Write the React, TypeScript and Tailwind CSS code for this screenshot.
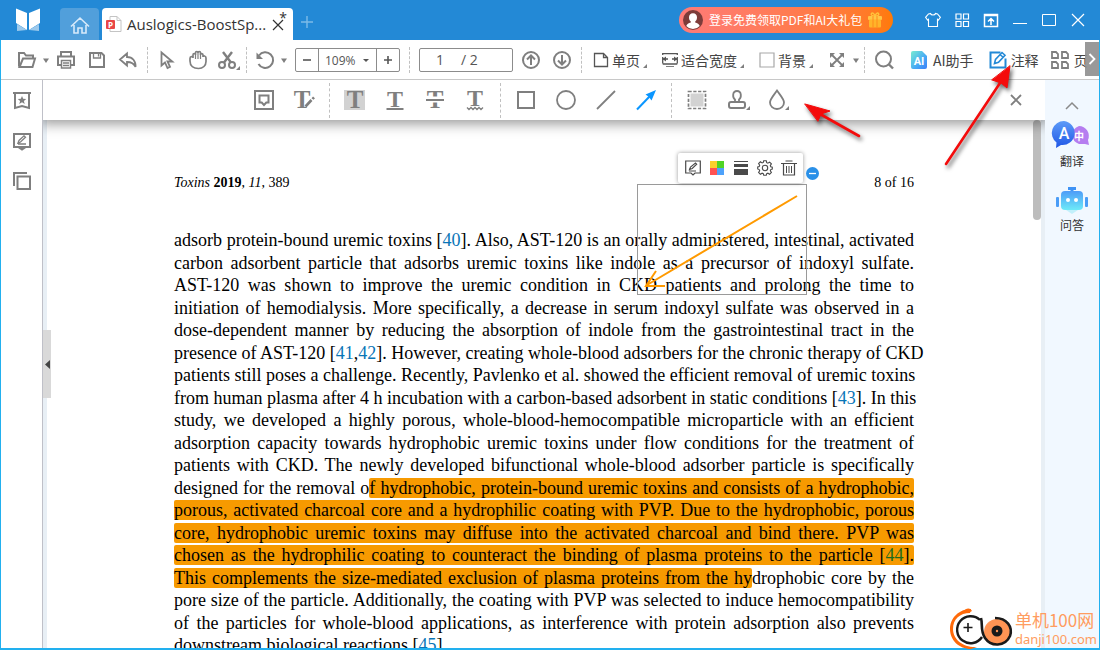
import type { ReactNode } from "react";
import clsx from "clsx";

type IconProps = { children: ReactNode; className?: string; box?: string };

function Icon({ children, className, box = "0 0 20 20" }: IconProps) {
  return (
    <svg
      viewBox={box}
      className={clsx("flex-none overflow-visible", className ?? "h-5 w-5")}
      fill="none"
      stroke="currentColor"
      strokeWidth="2"
      aria-hidden="true"
    >
      {children}
    </svg>
  );
}

function Tool({
  label,
  children,
  className = "w-[31px]",
}: {
  label: string;
  children: ReactNode;
  className?: string;
}) {
  return (
    <button
      type="button"
      aria-label={label}
      className={clsx("flex h-8 flex-none items-center justify-center", className)}
    >
      {children}
    </button>
  );
}

function Caret() {
  return (
    <button type="button" aria-label="更多" className="flex h-8 w-2 flex-none items-center">
      <Icon className="h-2 w-2" box="0 0 8 8">
        <path d="M1 2.5h6L4 7z" fill="currentColor" stroke="none" />
      </Icon>
    </button>
  );
}

function Corner() {
  return (
    <Icon className="mt-3 ml-[3px] h-1 w-1" box="0 0 4 4">
      <path d="M4 0v4H0z" fill="currentColor" stroke="none" />
    </Icon>
  );
}

function Divider({ className }: { className: string }) {
  return (
    <div className={clsx("flex flex-none justify-center", className)}>
      <div className="h-full border-l border-dashed border-[#c0c0c0]" />
    </div>
  );
}

function LetterT({ size = 24, y = 17 }: { size?: number; y?: number }) {
  return (
    <text
      x="12"
      y={y}
      textAnchor="middle"
      fontSize={size}
      fontWeight="bold"
      fontFamily="Liberation Serif, serif"
      fill="currentColor"
      stroke="none"
    >
      T
    </text>
  );
}

function TitleBar() {
  return (
    <header className="flex h-10 flex-none items-stretch bg-[#2389d6] pl-px text-white">
      <div className="flex w-[59px] items-center pl-[15px]">
        <svg viewBox="0 0 24 24" className="h-6 w-6" aria-label="PDF" role="img">
          <path d="M0 .5 11 5v17L0 15z" fill="#fff" />
          <path d="M24 .5 13 5v17l11-7z" fill="#fff" />
          <path d="M1 16v7l10-1z M23 16v7l-10-1z" fill="#9cc9ec" />
        </svg>
      </div>
      <button
        type="button"
        aria-label="主页"
        className="mt-2 flex w-[39px] items-center justify-center rounded-t bg-[#519fdb] text-[#d8eafa]"
      >
        <Icon className="mt-1 h-5 w-5">
          <path d="M1 10.5 10 2l9 8.5M4 9v8h4v-5h4v5h4V9" strokeWidth="1.6" />
        </Icon>
      </button>
      <div className="relative mt-2 ml-[3px] flex w-[191px] items-center rounded-t bg-white text-[#333]">
        <svg viewBox="0 0 18 18" className="ml-[3px] h-[18px] w-[18px] overflow-visible" aria-hidden="true">
          <path d="M5 1.5h7l4 4v11H5z" fill="#fff" stroke="#c4c4c4" />
          <path d="M12 1.5v4h4" fill="none" stroke="#c4c4c4" />
          <rect x="1" y="5" width="9" height="9" rx="1" fill="#e94646" />
          <text x="5.5" y="12.5" fontSize="8" fontWeight="bold" textAnchor="middle" fill="#fff" fontFamily="Open Sans, sans-serif">
            P
          </text>
        </svg>
        <span className="ml-1 flex-1 font-['Open_Sans',sans-serif] text-[15px] whitespace-nowrap">
          Auslogics-BoostSp...
        </span>
        <button type="button" aria-label="关闭标签" className="mt-0.5 mr-2 p-px">
          <Icon className="h-3 w-3" box="0 0 12 12">
            <path d="m1 1 10 10M11 1 1 11" strokeWidth="1.2" />
          </Icon>
        </button>
        <span className="absolute top-0.5 right-[6px] font-['Open_Sans',sans-serif] text-sm leading-4">*</span>
      </div>
      <button type="button" aria-label="新建标签" className="px-2 pt-1">
        <Icon className="h-3 w-3 text-[#7dbbe8]" box="0 0 12 12">
          <path d="M6 0v12M0 6h12" strokeWidth="1.4" />
        </Icon>
      </button>

      <button
        type="button"
        className="my-[7px] mr-[25px] ml-auto flex w-[214px] flex-none items-center rounded-full bg-linear-to-r from-[#ff7b78] to-[#ff7a05] text-xs whitespace-nowrap"
      >
        <svg viewBox="0 0 20 20" className="ml-1 h-5 w-5" aria-hidden="true">
          <circle cx="10" cy="10" r="10" fill="#7d3c3a" />
          <path d="M10 3.2c2.600 0 4 1.800 4 4.200 0 1.800-.8 3.200-1.800 4v1.100c2.200.7 4 1.500 4.500 3.500a9 9 0 0 1-13.400 0c.5-2 2.300-2.800 4.500-3.500v-1.100c-1-.8-1.800-2.200-1.800-4 0-2.400 1.400-4.200 4-4.200z" fill="#fff" />
        </svg>
        <span className="ml-[6px]">登录免费领取PDF和AI大礼包</span>
        <svg viewBox="0 0 16 16" className="ml-[5px] h-4 w-4" aria-hidden="true">
          <path d="M7.500 4C5 4 3.500 3 4.500 1.500S7.500 2 8 4c.5-2 2.500-4 3.500-2.500S11 4 8.500 4" fill="none" stroke="#ffc23a" strokeWidth="1.400" />
          <rect x="1" y="4" width="14" height="4" rx="1" fill="#ffc646" />
          <rect x="2" y="7.500" width="12" height="8" rx="1" fill="#ffb429" />
          <path d="M6 4v11.500M10 4v11.500" stroke="#ff8a1c" />
        </svg>
      </button>
      <div className="mr-2 flex flex-none items-center">
        <Tool label="皮肤" className="w-[29px]">
          <Icon className="h-4 w-4" box="0 0 16 16">
            <path d="M5.500 1.500 3.500 2 .6 5.300 2.500 8l1-.7v7.200h9V7.300l1 .7 1.900-2.700L12.500 2l-2-.5C10 3.400 6 3.400 5.500 1.500z" strokeWidth="1.100" />
          </Icon>
        </Tool>
        <Tool label="应用" className="w-[29px]">
          <Icon className="h-4 w-4" box="0 0 16 16">
            <path d="M2 2h5v5H2zM9.500 2h5v5h-5zM2 9.500h5v5H2zM9.500 9.500h5v5h-5z" strokeWidth="1.200" />
          </Icon>
        </Tool>
        <Tool label="上传" className="w-[29px]">
          <Icon className="h-4 w-4" box="0 0 16 16">
            <path d="M1.500 2.500h13v12h-13zM1.500 3.500h13M8 13V7M5 9.500l3-3 3 3" strokeWidth="1.500" />
          </Icon>
        </Tool>
        <Tool label="最小化" className="w-[29px]">
          <Icon className="h-4 w-4" box="0 0 16 16">
            <path d="M1 11.500h14" strokeWidth="1" />
          </Icon>
        </Tool>
        <Tool label="最大化" className="w-[29px]">
          <Icon className="h-4 w-4" box="0 0 16 16">
            <path d="M1.500 2.500h13v11h-13z" strokeWidth="1" />
          </Icon>
        </Tool>
        <Tool label="关闭" className="w-[29px]">
          <Icon className="h-4 w-4" box="0 0 16 16">
            <path d="m2 2 12 12M14 2 2 14" strokeWidth="1.200" />
          </Icon>
        </Tool>
      </div>
    </header>
  );
}

function MainToolbar() {
  return (
    <div className="relative flex h-10 flex-none items-center overflow-hidden border-b border-[#c8c8c8] bg-white pl-[11px] text-sm whitespace-nowrap text-[#7f7f7f]">
      <Tool label="打开" className="w-[30px]">
        <Icon>
          <path d="M2 16.500V3h5l2 2.500h7V8M2.500 17 6 8.500h12L15.500 17z" />
        </Icon>
      </Tool>
      <Caret />
      <Tool label="打印">
        <Icon>
          <path d="M5 6V2h10v4M5 15H2V6.500h16V15h-3" />
          <path d="M5.500 10.500h9V18h-9zM7 13h6M7 15.500h6" strokeWidth="1.500" />
        </Icon>
      </Tool>
      <Tool label="保存">
        <Icon>
          <path d="M3 3h11.500L17 5.500V17H3z" />
          <path d="M6.500 3v5h7V3M11.500 4v2.500" strokeWidth="1.300" />
        </Icon>
      </Tool>
      <Tool label="撤销">
        <Icon>
          <path d="M9 3.500 2 9.500l7 6V12c4 0 7 1.500 8.500 5C18 11 14.500 7 9 7z" strokeWidth="1.800" />
        </Icon>
      </Tool>
      <Divider className="h-[26px] w-2" />
      <Tool label="选择">
        <Icon>
          <path d="M4.500 2.500v13l3.500-3 2.500 5.500 2.500-1.200-2.500-5.300h4.800z" strokeWidth="1.800" />
        </Icon>
      </Tool>
      <Tool label="手型">
        <Icon>
          <path d="M2 8.500C2 6 5 6 5 8V5c0-2 2.500-2 2.500 0V3c0-2 2.500-2 2.500 0 0-2 2.500-2 2.500 0v2c0-2 2.500-1.500 2.500 0v2c0-1.500 3-1.500 3 1v3.500c0 4-3 7-7.500 7C5.500 18.500 2 16 2 11z" strokeWidth="1.700" />
          <path d="M7.500 5v4M10 3v6M12.500 5v4" strokeWidth="1.200" />
        </Icon>
      </Tool>
      <Tool label="剪切">
        <Icon className="h-5 w-6" box="0 0 24 20">
          <path d="m6 2 8 10.500M15 2 7 12.500" strokeWidth="2.400" />
          <circle cx="5" cy="15" r="3" />
          <circle cx="15" cy="15" r="3" />
          <path d="M23 16v4h-4z" fill="currentColor" stroke="none" />
        </Icon>
      </Tool>
      <Divider className="h-[26px] w-[5px]" />
      <Tool label="旋转">
        <Icon>
          <path d="M4 5.500A7.800 7.800 0 1 1 3.500 14" />
          <path d="M1.500 2.500V9H8z" fill="currentColor" stroke="none" />
        </Icon>
      </Tool>
      <Caret />
      <div className="ml-[7px] flex h-6 w-[105px] flex-none rounded-xs border border-[#8c8c8c] text-[#555]">
        <button type="button" aria-label="缩小" className="flex w-[23px] items-center justify-center border-r border-[#8c8c8c]">
          <Icon className="h-2 w-2" box="0 0 8 8">
            <path d="M0 4h8" strokeWidth="1.600" />
          </Icon>
        </button>
        <div className="relative flex-1">
          <select aria-label="缩放比例" className="h-full w-full appearance-none pl-1.5 font-['Open_Sans',sans-serif] text-xs outline-none">
            <option>109%</option>
          </select>
          <Icon className="pointer-events-none absolute top-2 right-1.5 h-2 w-2" box="0 0 8 8">
            <path d="M1 2h6L4 5z" fill="currentColor" stroke="none" />
          </Icon>
        </div>
        <button type="button" aria-label="放大" className="flex w-[23px] items-center justify-center border-l border-[#8c8c8c]">
          <Icon className="h-2 w-2" box="0 0 8 8">
            <path d="M0 4h8M4 0v8" strokeWidth="1.600" />
          </Icon>
        </button>
      </div>
      <Divider className="h-[26px] w-[19px]" />
      <div className="flex h-6 w-[94px] flex-none items-center rounded-xs border border-[#8c8c8c] font-['Open_Sans',sans-serif] text-sm text-[#555]">
        <input aria-label="页码" defaultValue="1" className="w-[41px] pl-4 outline-none" />
        <span>/ 2</span>
      </div>
      <Tool label="上一页" className="ml-0.5 w-[31px]">
        <Icon>
          <circle cx="10" cy="10" r="8" />
          <path d="M10 15V6M6 9.500l4-4 4 4" />
        </Icon>
      </Tool>
      <Tool label="下一页">
        <Icon>
          <circle cx="10" cy="10" r="8" />
          <path d="M10 5v9M6 10.500l4 4 4-4" />
        </Icon>
      </Tool>
      <Divider className="h-[26px] w-2" />
      <button type="button" className="ml-2 flex flex-none items-center">
        <Icon className="h-4 w-4" box="0 0 16 16">
          <path d="M1.500 1.500h9l4 4v9h-13zM10.500 1.500v4h4" stroke="#555" strokeWidth="1.300" />
        </Icon>
        <span className="ml-[3px] text-[#444]">单页</span>
        <Corner />
      </button>
      <button type="button" className="ml-[15px] flex flex-none items-center">
        <Icon className="h-4 w-4" box="0 0 16 16">
          <path d="M.7 3v-1.300h14.600V3M.7 5v6.500M15.300 5v6.500M.7 12h14.600M1 7h5M15 7h-5" stroke="#555" strokeWidth="1.300" />
          <path d="m4 4.500-3.500 2.500L4 9.500zM12 4.500 15.500 7 12 9.500z" fill="#555" stroke="none" />
          <path d="M4 14.500h8" strokeWidth="1" />
        </Icon>
        <span className="ml-[3px] text-[#444]">适合宽度</span>
        <Corner />
      </button>
      <button type="button" className="ml-[15px] flex flex-none items-center">
        <Icon className="h-4 w-4" box="0 0 16 16">
          <path d="M1 1h14v14H1z" stroke="#a8a8a8" strokeWidth="1.200" />
        </Icon>
        <span className="ml-[3px] text-[#444]">背景</span>
        <Corner />
      </button>
      <Tool label="适应窗口" className="ml-2 w-[31px]">
        <Icon>
          <path d="m5 5 10 10M15 5 5 15" strokeWidth="1.800" />
          <path d="M3 3h5L3 8zM17 3v5l-5-5zM17 17h-5l5-5zM3 17v-5l5 5z" fill="currentColor" stroke="none" />
        </Icon>
      </Tool>
      <Caret />
      <Divider className="h-[26px] w-2" />
      <Tool label="搜索">
        <Icon>
          <circle cx="9.500" cy="9" r="7.500" />
          <path d="m15 14.500 4 4" strokeWidth="2.400" />
        </Icon>
      </Tool>
      <button type="button" className="ml-3 flex flex-none items-center text-[#444]">
        <svg viewBox="0 0 16 18" className="h-[18px] w-4" aria-hidden="true">
          <defs>
            <linearGradient id="ai" x1="0" y1="0" x2="1" y2="1">
              <stop offset="0" stopColor="#79ecd2" />
              <stop offset=".6" stopColor="#46a9f5" />
              <stop offset="1" stopColor="#3d7ff8" />
            </linearGradient>
          </defs>
          <path d="M2 0h9l5 5v11a2 2 0 0 1-2 2H2a2 2 0 0 1-2-2V2a2 2 0 0 1 2-2z" fill="url(#ai)" />
          <text x="8" y="14" fontSize="11" fontWeight="bold" textAnchor="middle" fill="#fff" fontFamily="Roboto, sans-serif">
            AI
          </text>
        </svg>
        <span className="ml-[6px]">AI助手</span>
      </button>
      <button type="button" className="ml-3.5 flex flex-none items-center text-[#444]">
        <Icon className="h-5 w-5 text-[#2389d6]">
          <path d="M12.500 2.500h-10v15h15v-9" />
          <path d="m6.500 13.500 1-4L14 2.500l3 2.700-6.500 7zM12.500 5l3 2.500" strokeWidth="1.600" />
        </Icon>
        <span className="ml-[3px]">注释</span>
      </button>
      <button type="button" className="ml-3 flex flex-none items-center text-[#444]">
        <Icon className="h-[18px] w-[18px] text-[#7f7f7f]" box="0 0 18 18">
          <path d="M1 1h4l2 2v4H1zM11 1h4l2 2v4h-6zM1 11h4l2 2v4H1zM11 11h4l2 2v4h-6z" strokeWidth="1.800" />
        </Icon>
        <span className="ml-[5px]">页</span>
      </button>
      <button
        type="button"
        aria-label="展开工具栏"
        className="absolute top-0.5 right-0 flex h-[34px] w-[14px] items-center justify-center bg-[#8e8e8e]/90 text-white"
      >
        <Icon className="h-3 w-2" box="0 0 8 12">
          <path d="m1.500 1 5 5-5 5" strokeWidth="1.800" />
        </Icon>
      </button>
    </div>
  );
}

function AnnotationBar() {
  return (
    <div className="relative z-10 flex h-10 flex-none items-center bg-white text-[#7f7f7f] shadow-[0_1px_12px_3px_rgba(0,0,0,0.4)] [clip-path:inset(0_0_-20px_0)]">
      <div className="flex flex-1 items-center justify-center">
        <Tool label="注释框" className="w-10">
          <Icon>
            <path d="M1 1h18v18H1z" />
            <path d="M5.500 5.500h9v7h-2.200L10 15l-2.300-2.500H5.500z" />
          </Icon>
        </Tool>
        <Tool label="文字编辑" className="w-10">
          <Icon className="h-6 w-6" box="0 0 24 24">
            <g transform="translate(-2 0)">
              <LetterT size={25} y={20} />
            </g>
            <path d="m14 17 6-6" stroke="#fff" strokeWidth="5" />
            <path d="m13.500 18.500 6-6.500M20.500 11l1.500-1.700" strokeWidth="2.600" />
          </Icon>
        </Tool>
        <Divider className="h-[35px] w-[11px]" />
        <Tool label="高亮" className="w-10">
          <span className="flex h-5 w-[21px] items-center justify-center bg-[#d2d2d2]">
            <Icon className="h-6 w-6" box="0 0 24 24">
              <LetterT size={25} y={20} />
            </Icon>
          </span>
        </Tool>
        <Tool label="下划线" className="w-10">
          <Icon className="h-6 w-6" box="0 0 24 24">
            <LetterT y={19} />
            <path d="M3.500 21h17" />
          </Icon>
        </Tool>
        <Tool label="删除线" className="w-10">
          <Icon className="h-6 w-6" box="0 0 24 24">
            <LetterT size={25} y={20} />
            <path d="M2 11.500h20" stroke="#fff" strokeWidth="6" />
            <path d="M3 12h18" />
          </Icon>
        </Tool>
        <Tool label="波浪线" className="w-10">
          <Icon className="h-6 w-6" box="0 0 24 24">
            <LetterT y={18} />
            <path d="m4 19.500 2 2 2-2 2 2 2-2 2 2 2-2 2 2 2-2" strokeWidth="1.300" />
          </Icon>
        </Tool>
        <Divider className="h-[35px] w-[11px]" />
        <Tool label="矩形" className="w-10">
          <Icon>
            <path d="M2 2h16v16H2z" />
          </Icon>
        </Tool>
        <Tool label="椭圆" className="w-10">
          <Icon>
            <circle cx="10" cy="10" r="9" strokeWidth="1.800" />
          </Icon>
        </Tool>
        <Tool label="直线" className="w-10">
          <Icon>
            <path d="M1 19 19 1" strokeWidth="1.800" />
          </Icon>
        </Tool>
        <Tool label="箭头" className="w-10 text-[#0a96ff]">
          <Icon>
            <path d="M1 19.500 14 6" />
            <path d="M20 0 9.500 4.500 13 7l2.500 3.500z" fill="currentColor" stroke="none" />
          </Icon>
        </Tool>
        <Divider className="h-[35px] w-[11px]" />
        <Tool label="区域高亮" className="w-10">
          <Icon>
            <rect x="3.500" y="3.500" width="13" height="13" fill="#d2d2d2" stroke="none" />
            <path d="M1.500 1.500h17v17h-17z" strokeWidth="1.700" strokeDasharray="3.200 1.600" />
          </Icon>
        </Tool>
        <Tool label="图章" className="w-10">
          <Icon className="ml-1 h-5 w-6" box="0 0 24 20">
            <path d="M8 12V9.500C5.500 8 5 1 10 1s4.500 7 2 8.500V12" strokeWidth="1.800" />
            <rect x="2" y="12" width="16" height="6" rx="2" />
            <path d="M23 16v4h-4z" fill="currentColor" stroke="none" />
          </Icon>
        </Tool>
        <Tool label="颜色" className="w-10">
          <Icon className="ml-1 h-5 w-6" box="0 0 24 20">
            <path d="M10 .5C7 5 3 9 3 12.500a7 6.500 0 0 0 14 0C17 9 13 5 10 .5z" strokeWidth="1.800" />
            <path d="M22 16v4h-4z" fill="currentColor" stroke="none" />
          </Icon>
        </Tool>
      </div>
      <Tool label="关闭工具栏" className="w-12 pr-2.5">
        <Icon className="h-3 w-3" box="0 0 12 12">
          <path d="m1 1 10 10M11 1 1 11" strokeWidth="1.800" />
        </Icon>
      </Tool>
    </div>
  );
}

function LeftRail() {
  return (
    <nav className="flex w-[42px] flex-none flex-col items-center border-r border-[#bfc0c8] bg-white pt-[5px] text-[#7f7f7f]">
      <Tool label="书签" className="mb-2 w-8">
        <Icon>
          <path d="M1 2h18M3 2v15l7-2 7 2V2" />
          <path d="m10 5 1.200 2.800 3 .2-2.300 2 .8 3-2.700-1.700L7.300 13l.8-3-2.300-2 3-.2z" fill="currentColor" stroke="none" />
        </Icon>
      </Tool>
      <Tool label="批注" className="mb-2 w-8">
        <Icon>
          <path d="M2 3h16v13H2z" />
          <path d="m6 12 1-2.500L12 4.800l1.500 1.500L8.500 11zM6 13h8" strokeWidth="1.300" />
          <path d="M6 17h8l-4 2.800z" fill="currentColor" stroke="none" />
        </Icon>
      </Tool>
      <Tool label="缩略图" className="w-8">
        <Icon>
          <path d="M5.500 5.500H18V18H5.500zM15 2H2v13" />
        </Icon>
      </Tool>
    </nav>
  );
}

function RightRail() {
  return (
    <aside className="flex w-[54px] flex-none flex-col items-center bg-[#f1f8ff] text-xs text-[#333]">
      <button type="button" aria-label="收起" className="mt-5 text-[#8a8a8a]">
        <Icon className="h-3 w-3.5" box="0 0 14 12">
          <path d="m1 9 6-6 6 6" strokeWidth="1.500" />
        </Icon>
      </button>
      <button type="button" className="mt-2 flex flex-col items-center">
        <svg viewBox="0 0 38 30" className="h-[30px] w-[38px] overflow-visible" aria-hidden="true">
          <defs>
            <linearGradient id="tr" x1="0" y1="0" x2="0" y2="1">
              <stop offset="0" stopColor="#5c9bf8" />
              <stop offset="1" stopColor="#2057e6" />
            </linearGradient>
          </defs>
          <path d="M26 6a10 10 0 0 1 9 14l1 5-4-1h-6a9.500 9.500 0 0 1 0-18z" fill="#b57df0" />
          <text x="26" y="20" fontSize="10" fontWeight="bold" textAnchor="middle" fill="#fff" fontFamily="Noto Sans CJK SC, sans-serif">
            中
          </text>
          <path d="M11 1a12 12 0 1 1-3 24l-5 3 .5-5.500A12 12 0 0 1 11 1z" fill="url(#tr)" />
          <text x="11" y="18.500" fontSize="16" textAnchor="middle" fill="#fff" fontFamily="Roboto, sans-serif" fontWeight="500">
            A
          </text>
        </svg>
        <span className="mt-0.5 leading-[18px]">翻译</span>
      </button>
      <button type="button" className="mt-4 flex flex-col items-center">
        <svg viewBox="0 0 32 28" className="h-7 w-8" aria-hidden="true">
          <defs>
            <linearGradient id="bot" x1="0" y1="0" x2="0" y2="1">
              <stop offset="0" stopColor="#4e9cf8" />
              <stop offset="1" stopColor="#6deaf8" />
            </linearGradient>
          </defs>
          <path d="M12 1h8v3h-8zM14.500 3h3v4h-3z" fill="#3f93f5" />
          <rect x="5" y="5" width="22" height="19" rx="4" fill="url(#bot)" />
          <rect x="0" y="11" width="3" height="10" rx="1" fill="#4a9df7" />
          <rect x="29" y="11" width="3" height="10" rx="1" fill="#4a9df7" />
          <path d="M10 24h12l-6 4z" fill="#c2f0fb" />
          <circle cx="12" cy="14" r="2" fill="#fff" />
          <circle cx="20" cy="14" r="2" fill="#fff" />
        </svg>
        <span className="mt-0.5 leading-[18px]">问答</span>
      </button>
    </aside>
  );
}

function Cite({ children }: { children: ReactNode }) {
  return <a href="#ref" className="text-[#0875b7]">{children}</a>;
}

function Mark({ children }: { children: ReactNode }) {
  return <mark className="rounded-xs bg-[#f79a00] text-black">{children}</mark>;
}

const lines: ReactNode[] = [
  <>adsorb protein-bound uremic toxins [<Cite>40</Cite>]. Also, AST-120 is an orally administered, intestinal, activated</>,
  "carbon adsorbent particle that adsorbs uremic toxins like indole as a precursor of indoxyl sulfate.",
  "AST-120 was shown to improve the uremic condition in CKD patients and prolong the time to",
  "initiation of hemodialysis. More specifically, a decrease in serum indoxyl sulfate was observed in a",
  "dose-dependent manner by reducing the absorption of indole from the gastrointestinal tract in the",
  <>presence of AST-120 [<Cite>41</Cite>,<Cite>42</Cite>]. However, creating whole-blood adsorbers for the chronic therapy of CKD</>,
  "patients still poses a challenge. Recently, Pavlenko et al. showed the efficient removal of uremic toxins",
  <>from human plasma after 4 h incubation with a carbon-based adsorbent in static conditions [<Cite>43</Cite>]. In this</>,
  "study, we developed a highly porous, whole-blood-hemocompatible microparticle with an efficient",
  "adsorption capacity towards hydrophobic uremic toxins under flow conditions for the treatment of",
  "patients with CKD. The newly developed bifunctional whole-blood adsorber particle is specifically",
  <>designed for the removal o<Mark>f hydrophobic, protein-bound uremic toxins and consists of a hydrophobic,</Mark></>,
  <Mark>porous, activated charcoal core and a hydrophilic coating with PVP. Due to the hydrophobic, porous</Mark>,
  <Mark>core, hydrophobic uremic toxins may diffuse into the activated charcoal and bind there. PVP was</Mark>,
  <Mark>chosen as the hydrophilic coating to counteract the binding of plasma proteins to the particle [<a href="#ref" className="text-[#1d6a1f]">44</a>].</Mark>,
  <><Mark>This complements the size-mediated exclusion of plasma proteins from the hy</Mark>drophobic core by the</>,
  "pore size of the particle. Additionally, the coating with PVP was selected to induce hemocompatibility",
  "of the particles for whole-blood applications, as interference with protein adsorption also prevents",
];

function ArrowAnnotation() {
  return (
    <>
      <div className="absolute top-16 left-[463px] h-[111px] w-[170px] border border-[#9a9a9a]">
        <svg viewBox="0 0 168 109" className="h-full w-full" fill="none" stroke="#ff9a00" strokeWidth="2" aria-hidden="true">
          <path d="M159 11 9 100M18 86 8 101h19" />
        </svg>
      </div>
      <div className="absolute top-[33px] left-[504px] flex h-[30px] w-[125px] items-center justify-center rounded-xs bg-white text-[#4a4a4a] shadow-[0_0_4px_rgba(0,0,0,0.4)]">
        <Tool label="编辑批注" className="w-6">
          <Icon className="h-4 w-4" box="0 0 16 16">
            <path d="M.7 1h14.600v12H10l-2 2-2-2H.7z" strokeWidth="1.200" />
            <path d="m4.500 9.500 1-2.500 5-4 1.200 1.200-4.500 4.300zM4 11h7" strokeWidth="1.100" />
          </Icon>
        </Tool>
        <Tool label="颜色" className="w-6">
          <Icon className="h-3.5 w-3.5" box="0 0 14 14">
            <g stroke="none">
              <path d="M0 0h7v7H0z" fill="#fbd02d" />
              <path d="M7 0h7v7H7z" fill="#50d426" />
              <path d="M0 7h7v7H0z" fill="#ff5252" />
              <path d="M7 7h7v7H7z" fill="#4ea2fb" />
            </g>
          </Icon>
        </Tool>
        <Tool label="线宽" className="w-6">
          <Icon className="h-3.5 w-3.5" box="0 0 14 14">
            <path d="M0 0h14v1H0zM0 3h14v3H0zM0 8h14v6H0z" fill="currentColor" stroke="none" />
          </Icon>
        </Tool>
        <Tool label="设置" className="w-6">
          <Icon className="h-4 w-4" box="0 0 16 16">
            <path d="M6.700.8h2.600l.4 1.900 1.200.5 1.700-1.100 1.800 1.800-1.100 1.700.5 1.200 1.500.3v2l-1.500.5-.5 1.200 1.100 1.700-1.800 1.800-1.700-1.100-1.200.5-.4 1.500H6.700l-.4-1.500-1.200-.5-1.700 1.100-1.800-1.800 1.100-1.700-.5-1.200L.7 9V7l1.500-.5.5-1.200-1.100-1.700 1.800-1.800 1.700 1.100 1.200-.5z" strokeWidth="1.100" />
            <circle cx="8" cy="8" r="2.700" strokeWidth="1.100" />
          </Icon>
        </Tool>
        <Tool label="删除" className="w-6">
          <Icon className="h-4 w-4" box="0 0 16 16">
            <path d="M0 3.500h16M4.500 1h7M2.500 4v11h11V4" strokeWidth="1.200" />
            <path d="M5.500 6v7M8 6v7M10.500 6v7" strokeWidth="1" />
          </Icon>
        </Tool>
      </div>
      <button type="button" aria-label="收起工具条" className="absolute top-[47px] left-[632px]">
        <svg viewBox="0 0 13 13" className="h-[13px] w-[13px]" aria-hidden="true">
          <circle cx="6.500" cy="6.500" r="6.500" fill="#2a90e8" />
          <path d="M3 6.500h7" stroke="#fff" strokeWidth="1.300" />
        </svg>
      </button>
    </>
  );
}

function Document() {
  return (
    <main className="relative flex min-h-0 flex-1 border-x-4 border-[#e8eff5] bg-white">
      <div className="min-w-0 flex-1 overflow-hidden">
        <article className="relative mx-auto w-[740px] pt-[52px] font-['Liberation_Serif',serif] text-[18px] leading-[22px] text-black">
          <div className="mb-[35px] flex justify-between text-[14px] leading-[22px]">
            <p>
              <i>Toxins</i> <b>2019</b>, <i>11</i>, 389
            </p>
            <p>8 of 16</p>
          </div>
          {lines.map((line, i) => (
            <p key={i} className="whitespace-nowrap [text-align-last:justify] even:mb-px">
              {line}
            </p>
          ))}
          <p>
            downstream biological reactions [<Cite>45</Cite>].
          </p>
          <ArrowAnnotation />
        </article>
      </div>
      {/* scrollbar thumb */}
      <div className="absolute top-0 right-0 h-[100px] w-2 rounded-full bg-[#bdbdbd]" />
      <button
        type="button"
        aria-label="折叠侧栏"
        className="absolute top-[210px] -left-1 flex h-[68px] w-2 items-center bg-[#d9d9d9] text-[#444]"
      >
        <Icon className="ml-0.5 h-[9px] w-[5px]" box="0 0 5 9">
          <path d="M5 0v9L0 4.500z" fill="currentColor" stroke="none" />
        </Icon>
      </button>
    </main>
  );
}

// red pointer arrows over the toolbars
function Pointers() {
  return (
    <svg
      viewBox="0 0 320 180"
      className="pointer-events-none absolute top-0 right-0 z-20 h-[180px] w-80 drop-shadow-[2px_3px_2px_rgba(0,0,0,0.6)]"
      fill="#f40b0b"
      stroke="#f40b0b"
      strokeLinecap="round"
      aria-hidden="true"
    >
      <path d="m40 114 39 22" strokeWidth="2.600" />
      <path d="m25 104 25 7-9 3-3 7z" />
      <path d="m166 164 54-81" strokeWidth="2.600" />
      <path d="m230 66-3 22-6-5-9-3z" />
    </svg>
  );
}

function Watermark() {
  return (
    <div className="pointer-events-none absolute right-[3px] bottom-0 z-20 flex items-center gap-px font-['Noto_Sans_CJK_SC',sans-serif] text-[#ff9c60]">
      <svg viewBox="0 0 64 42" className="h-[42px] w-16" fill="none" aria-hidden="true">
        <path d="M21 1C9 1 0 10 0 21c0 11 9 20 21 20l6-2C14 40 3 32 3 21 3 11 10 5 20 5z" fill="#ff6a0a" />
        <path d="M12 4C16 0 20-1 22 3l-4 2z" fill="#ff6a0a" />
        <path d="M30 12A13.500 13.500 0 1 0 32 29" stroke="#1a1a1a" strokeWidth="2.400" />
        <path d="M18 15v9M13.500 19.500h9" stroke="#1a1a1a" strokeWidth="1.600" />
        <circle cx="47" cy="24" r="13" fill="#ff9454" />
        <path d="M31 10c2 7-1 12 4 20 6 9 20 9 25-2 3-9-3-18-15-18" stroke="#1a1a1a" strokeWidth="2.600" />
        <circle cx="47" cy="23" r="5.500" fill="#1a1a1a" />
        <circle cx="47" cy="23" r="1.200" fill="#ff9454" />
      </svg>
      <div className="whitespace-nowrap">
        <p className="text-[17px] leading-5">单机100网</p>
        <p className="font-['Noto_Sans',sans-serif] text-[13px] leading-[18px]">danji100.com</p>
      </div>
    </div>
  );
}

export default function App() {
  return (
    <div className="relative flex h-screen flex-col overflow-hidden bg-white font-['Noto_Sans_CJK_SC',sans-serif]">
      <TitleBar />
      <div className="flex min-h-0 flex-1 flex-col border-x border-b-2 border-[#22b0ef]">
        <MainToolbar />
        <div className="flex min-h-0 flex-1">
          <LeftRail />
          <div className="flex min-w-0 flex-1 flex-col">
            <AnnotationBar />
            <Document />
          </div>
          <RightRail />
        </div>
      </div>
      <Pointers />
      <Watermark />
    </div>
  );
}
